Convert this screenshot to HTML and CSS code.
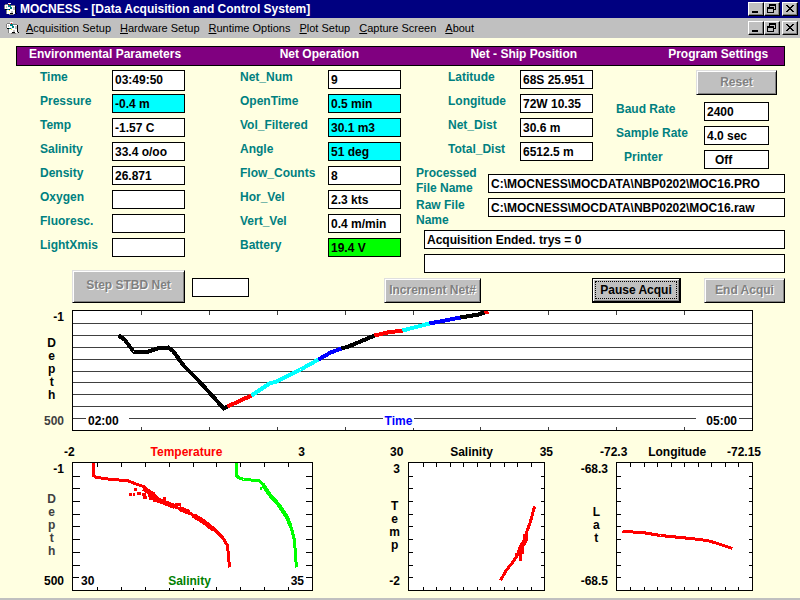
FILE: index.html
```
<!DOCTYPE html>
<html lang="en">
<head>
    <meta charset="UTF-8">
    <meta name="viewport" content="width=device-width, initial-scale=1.0">
    <title>MOCNESS</title>
    <link rel="stylesheet" href="styles.css">
</head>
<body>
    <!-- shared icons -->
    <svg class="defs" width="0" height="0">
        <symbol id="app" viewBox="0 0 14 14">
            <path fill="#808080" d="M1 2h3v1H1zM0 3h1v4H0zM7 3h4v1H7zM2 8h1v4H2zM5 12h5v1H5z"/>
            <path fill="#fff" d="M4 1h3v1H4zM1 3h6v4H1zM7 4h4v3H7zM3 8h3v4H3zM6 7h5v5H6z"/>
            <path fill="#008080" d="M4 3h3v2H4zM6 5h2v2H6zM3 7h2v1H3z"/>
            <path fill="#c0c0c0" d="M2 4h1v2H2zM9 5h2v3H9zM7 9h2v2H7z"/>
            <path fill="#000" d="M1 7h2v1H1zM11 4h1v7h-1zM6 11h3v1H6zM12 11h1v1h-1z"/>
            <path fill="#ff0" d="M5 8h1v1H5z"/>
            <path fill="#f00" d="M5 2h1v1H5z"/>
        </symbol>
        <symbol id="min" viewBox="0 0 12 10"><path d="M2 7h6v2H2z"/></symbol>
        <symbol id="restore" viewBox="0 0 12 10">
            <path fill-rule="evenodd" d="M3 0h7v6H8v3H1V3h2zM4 2v1h4v2h1V2zM2 5v3h5V5z"/>
        </symbol>
        <symbol id="close" viewBox="0 0 12 10">
            <path d="M2 1h2v1h1v1h2V2h1V1h2v1H9v1H8v1H7v1h1v1h1v1h1v1H8V7H7V6H5v1H4v1H2V7h1V6h1V5h1V4H4V3H3V2H2z"/>
        </symbol>
    </svg>

    <header class="titlebar">
        <svg class="app-icon"><use href="#app"/></svg>
        <h1>MOCNESS - [Data Acquisition and Control System]</h1>
        <div class="win-buttons">
            <button aria-label="Minimize"><svg><use href="#min"/></svg></button>
            <button aria-label="Restore"><svg><use href="#restore"/></svg></button>
            <button aria-label="Close"><svg><use href="#close"/></svg></button>
        </div>
    </header>
    <nav class="menubar">
        <svg class="app-icon"><use href="#app"/></svg>
        <a href="#"><u>A</u>cquisition Setup</a>
        <a href="#"><u>H</u>ardware Setup</a>
        <a href="#"><u>R</u>untime Options</a>
        <a href="#"><u>P</u>lot Setup</a>
        <a href="#"><u>C</u>apture Screen</a>
        <a href="#"><u>A</u>bout</a>
        <div class="win-buttons">
            <button aria-label="Minimize window"><svg><use href="#min"/></svg></button>
            <button aria-label="Restore window"><svg><use href="#restore"/></svg></button>
            <button aria-label="Close window"><svg><use href="#close"/></svg></button>
        </div>
    </nav>

    <main>
        <div class="section-bar">
            <h2>Environmental Parameters</h2>
            <h2>Net Operation</h2>
            <h2>Net - Ship Position</h2>
            <h2>Program Settings</h2>
        </div>

        <div class="panels">
            <section class="fields env">
                <label for="time">Time</label><input id="time" class="tall" value="03:49:50" readonly>
                <label for="pressure">Pressure</label><input id="pressure" class="cyan" value="-0.4 m" readonly>
                <label for="temp">Temp</label><input id="temp" value="-1.57 C" readonly>
                <label for="salinity">Salinity</label><input id="salinity" value="33.4 o/oo" readonly>
                <label for="density">Density</label><input id="density" value="26.871" readonly>
                <label for="oxygen">Oxygen</label><input id="oxygen" readonly>
                <label for="fluor">Fluoresc.</label><input id="fluor" readonly>
                <label for="light">LightXmis</label><input id="light" readonly>
            </section>

            <section class="fields net">
                <label for="netnum">Net_Num</label><input id="netnum" value="9" readonly>
                <label for="opentime">OpenTime</label><input id="opentime" class="cyan" value="0.5 min" readonly>
                <label for="vol">Vol_Filtered</label><input id="vol" class="cyan" value="30.1 m3" readonly>
                <label for="angle">Angle</label><input id="angle" class="cyan" value="51 deg" readonly>
                <label for="flow">Flow_Counts</label><input id="flow" value="8" readonly>
                <label for="hvel">Hor_Vel</label><input id="hvel" value="2.3 kts" readonly>
                <label for="vvel">Vert_Vel</label><input id="vvel" value="0.4 m/min" readonly>
                <label for="battery">Battery</label><input id="battery" class="green" value="19.4 V" readonly>
            </section>

            <section class="right">
                <div class="right-top">
                    <div class="fields position">
                        <label for="lat">Latitude</label><input id="lat" value="68S 25.951" readonly>
                        <label for="lon">Longitude</label><input id="lon" value="72W 10.35" readonly>
                        <label for="netdist">Net_Dist</label><input id="netdist" value="30.6 m" readonly>
                        <label for="totdist">Total_Dist</label><input id="totdist" value="6512.5 m" readonly>
                    </div>
                    <div class="settings">
                        <button class="btn reset" disabled>Reset</button>
                        <div class="fields">
                            <label for="baud">Baud Rate</label><input id="baud" value="2400" readonly>
                            <label for="rate">Sample Rate</label><input id="rate" value="4.0 sec" readonly>
                            <label for="printer" class="indent">Printer</label><input id="printer" class="indent" value="Off" readonly>
                        </div>
                    </div>
                </div>
                <div class="files">
                    <div class="file-labels">
                        <label for="pro">Processed File Name</label>
                        <label for="raw">Raw File Name</label>
                    </div>
                    <div class="file-boxes">
                        <input id="pro" value="C:\MOCNESS\MOCDATA\NBP0202\MOC16.PRO" readonly>
                        <input id="raw" value="C:\MOCNESS\MOCDATA\NBP0202\MOC16.raw" readonly>
                    </div>
                </div>
                <div class="messages">
                    <input aria-label="Status" value="Acquisition Ended. trys = 0" readonly>
                    <input aria-label="Message" readonly>
                </div>
            </section>
        </div>

        <div class="controls">
            <button class="btn step" disabled>Step STBD Net</button>
            <input class="step-box" aria-label="Net to step">
            <button class="btn incr" disabled>Increment Net#</button>
            <button class="btn pause"><span>Pause Acqui</span></button>
            <button class="btn end" disabled>End Acqui</button>
        </div>

        <figure class="plot profile">
            <div class="y-axis"><span>-1</span><span class="word">D<br>e<br>p<br>t<br>h</span><span class="gray">500</span></div>
            <div class="canvas">
                <svg viewBox="0 0 681 121" preserveAspectRatio="none">
                    <g transform="translate(.5 .5)">
                        <path class="grid" d="M0 13h680M0 25h680M0 37h680M0 49h680M0 61h680M0 72h680M0 84h680M0 96h680M0 108h680"/>
                        <path class="grid" d="M69 0v4M137 0v4M205 0v4M273 0v4M341 0v4M408 0v4M476 0v4M544 0v4M612 0v4M69 120v-4M137 120v-4M205 120v-4M273 120v-4M341 120v-4M408 120v-4M476 120v-4M544 120v-4M612 120v-4"/>
                        <g class="trace thick">
                            <path stroke="#000" d="M46 25l6 4 9 12h15l9-3 11-1 5 4 10 14 14 14 20 22 6 7 4-2"/>
                            <path stroke="#f00" d="M155 96l24-11"/>
                            <path stroke="#0ff" d="M179 85l18-12 7-2 24-12 18-10"/>
                            <path stroke="#00f" d="M246 49l12-7 11-4"/>
                            <path stroke="#000" d="M269 38l7-2 12-5 14-6"/>
                            <path stroke="#f00" d="M302 25l13-3 15-2"/>
                            <path stroke="#0ff" d="M330 20l27-7"/>
                            <path stroke="#00f" d="M357 13l31-6"/>
                            <path stroke="#000" d="M388 7l18-3 6-2"/>
                            <path stroke="#f00" d="M412 2l4-1"/>
                        </g>
                        <rect class="frame" width="680" height="120"/>
                    </g>
                </svg>
                <div class="x-inside"><span class="from">02:00</span><span class="blue">Time</span><span class="to">05:00</span></div>
            </div>
        </figure>

        <div class="small-plots">
            <figure class="plot depth-plot">
                <figcaption class="x-axis"><span>-2</span><span class="red">Temperature</span><span>3</span></figcaption>
                <div class="y-axis"><span>-1</span><span class="word gray">D<br>e<br>p<br>t<br>h</span><span>500</span></div>
                <div class="canvas">
                    <svg viewBox="0 0 241 129" preserveAspectRatio="none">
                        <g transform="translate(.5 .5)">
                            <path class="tick" d="M25 0v4M49 0v4M73 0v4M97 0v4M121 0v4M144 0v4M168 0v4M192 0v4M216 0v4M25 128v-4M49 128v-4M73 128v-4M97 128v-4M121 128v-4M144 128v-4M168 128v-4M192 128v-4M216 128v-4"/>
                            <path class="tick" d="M0 14h7M0 26h7M0 39h7M0 52h7M0 64h7M0 77h7M0 90h7M0 103h7M0 115h7M240 14h-7M240 26h-7M240 39h-7M240 52h-7M240 64h-7M240 77h-7M240 90h-7M240 103h-7M240 115h-7"/>
                            <g class="trace" stroke="#f00">
                                <path d="M21 0v13l3 2 9 1 5 1 17 1 7 3 9 3 4 4 6 3 5 6 5 3 10 4 12 4 8 5 10 5 10 8 9 9 5 8 1 10 1 12"/>
                                <path stroke-width="5" d="M71 26l8 5 5 6 8 3 10 4M107 46l10 4M121 53l10 6 10 8"/>
                                <path d="M56 32h3M60 32h2M63 25v3M64 31h4M69 32h4M70 35h4M75 33h4M76 36h4M80 38h5M92 34v6M102 42h6"/>
                            </g>
                            <g class="trace" stroke="#0f0">
                                <path d="M164 0v13l2 2 5 2 15 1 5 4 5 9 9 10 9 13 5 12 3 12 1 15 1 12"/>
                                <path stroke-width="4" d="M191 23l6 9 9 10 8 12 4 9"/>
                                <path d="M187 26h2"/>
                            </g>
                            <rect class="frame" width="240" height="128"/>
                        </g>
                    </svg>
                    <div class="x-inside"><span>30</span><span class="dark-green">Salinity</span><span>35</span></div>
                </div>
            </figure>

            <figure class="plot ts-plot">
                <figcaption class="x-axis"><span>30</span><span>Salinity</span><span>35</span></figcaption>
                <div class="y-axis"><span>3</span><span class="word">T<br>e<br>m<br>p</span><span>-2</span></div>
                <div class="canvas">
                    <svg viewBox="0 0 137 129" preserveAspectRatio="none">
                        <g transform="translate(.5 .5)">
                            <path class="tick" d="M15 0v4M28 0v4M42 0v4M55 0v4M69 0v4M82 0v4M96 0v4M109 0v4M123 0v4M15 128v-4M28 128v-4M42 128v-4M55 128v-4M69 128v-4M82 128v-4M96 128v-4M109 128v-4M123 128v-4"/>
                            <path class="tick" d="M0 14h4M0 26h4M0 39h4M0 52h4M0 64h4M0 77h4M0 90h4M0 103h4M0 115h4M136 14h-4M136 26h-4M136 39h-4M136 52h-4M136 64h-4M136 77h-4M136 90h-4M136 103h-4M136 115h-4"/>
                            <g class="trace" stroke="#f00">
                                <path d="M126 44l-4 15-4 11-2 11-6 10-6 9-7 9-5 9"/>
                                <path stroke-width="5" d="M117 71v6l-5 9-2 7"/>
                                <path d="M106 92h7M112 90v8M114 82v9"/>
                            </g>
                            <rect class="frame" width="136" height="128"/>
                        </g>
                    </svg>
                </div>
            </figure>

            <figure class="plot map-plot">
                <figcaption class="x-axis"><span>-72.3</span><span>Longitude</span><span>-72.15</span></figcaption>
                <div class="y-axis"><span>-68.3</span><span class="word">L<br>a<br>t</span><span>-68.5</span></div>
                <div class="canvas">
                    <svg viewBox="0 0 137 129" preserveAspectRatio="none">
                        <g transform="translate(.5 .5)">
                            <path class="tick" d="M14 0v4M28 0v4M41 0v4M55 0v4M68 0v4M82 0v4M95 0v4M109 0v4M122 0v4M14 128v-4M28 128v-4M41 128v-4M55 128v-4M68 128v-4M82 128v-4M95 128v-4M109 128v-4M122 128v-4"/>
                            <path class="tick" d="M0 14h4M0 26h4M0 39h4M0 52h4M0 64h4M0 77h4M0 90h4M0 103h4M0 115h4M136 14h-4M136 26h-4M136 39h-4M136 52h-4M136 64h-4M136 77h-4M136 90h-4M136 103h-4M136 115h-4"/>
                            <path class="trace" stroke="#f00" d="M6 69l20 1 18 3 30 3 17 2 10 3 15 5"/>
                            <rect class="frame" width="136" height="128"/>
                        </g>
                    </svg>
                </div>
            </figure>
        </div>
    </main>
</body>
</html>
```
FILE: styles.css
```
* {
    box-sizing: border-box;
}
body {
    margin: 0;
    background-color: #ffffe1;
    border-bottom: 2px solid #c0c0c0;
    font-family: "Liberation Sans", Arial, sans-serif;
    font-size: 12px;
    font-weight: bold;
    line-height: 15px;
    color: #000;
}
h1, h2, figure {
    margin: 0;
    font-size: 12px;
}
button, input {
    font: inherit;
    margin: 0;
}
.defs {
    position: absolute;
}

/* title and menu */
.titlebar, .menubar {
    display: flex;
    align-items: center;
    padding: 0 2px 0 4px;
}
.titlebar {
    height: 18px;
    background-color: #000080;
    color: #fff;
}
.titlebar h1 {
    margin-left: 2px;
    white-space: nowrap;
}
.menubar {
    height: 20px;
    background-color: #c0c0c0;
    font-size: 11px;
    font-weight: normal;
    gap: 9px;
}
.menubar a {
    color: #000;
    text-decoration: none;
    white-space: nowrap;
}
.menubar .app-icon {
    margin: 0 -3px 0 2px;
}
.app-icon {
    width: 14px;
    height: 14px;
    flex: none;
    shape-rendering: crispEdges;
}
.win-buttons {
    display: flex;
    margin-left: auto;
}
.win-buttons button {
    width: 16px;
    height: 14px;
    padding: 1px;
    background-color: #c0c0c0;
    border: 1px solid;
    border-color: #fff #000 #000 #fff;
    box-shadow: inset -1px -1px #808080;
}
.win-buttons button:last-child {
    margin-left: 2px;
}
.win-buttons svg {
    display: block;
    width: 12px;
    height: 10px;
    shape-rendering: crispEdges;
}

main {
    padding: 8px 15px 7px 16px;
}
.section-bar {
    display: grid;
    grid-template-columns: 251fr 191fr 198fr 116fr;
    height: 20px;
    padding-left: 12px;
    background-color: #800080;
    border: 1px solid #000;
    color: #fff;
    white-space: nowrap;
}

/* readouts */
.panels {
    display: grid;
    grid-template-columns: 200fr 176fr 369fr;
    padding: 4px 0 0 24px;
}
.fields {
    display: grid;
    grid-template-columns: 72px 73px;
    grid-auto-rows: 19px;
    row-gap: 5px;
    align-content: start;
}
.fields.net {
    grid-template-columns: 88px 73px;
}
label {
    color: #008080;
}
input {
    width: 100%;
    height: 19px;
    padding: 0 2px;
    background-color: #fff;
    border: 1px solid #000;
    border-radius: 0;
    color: #000;
}
input.tall {
    height: 21px;
    padding-bottom: 2px;
}
input.cyan {
    background-color: #0ff;
}
input.green {
    background-color: #0f0;
}
.right-top {
    display: flex;
    justify-content: space-between;
    padding-left: 32px;
}
.settings {
    width: 169px;
}
.settings .fields {
    grid-template-columns: 88px 65px;
    margin-top: 7px;
}
label.indent {
    padding-left: 8px;
}
input.indent {
    padding-left: 10px;
}
.files {
    display: flex;
    margin-top: -3px;
}
.file-labels {
    width: 72px;
    flex: none;
}
.file-labels label {
    display: block;
    height: 32px;
}
.file-boxes {
    flex: 1;
    padding-top: 8px;
}
.file-boxes, .messages {
    display: flex;
    flex-direction: column;
    gap: 5px;
}
.messages {
    margin-left: 8px;
}

/* buttons */
.btn {
    height: 25px;
    padding: 0;
    background-color: #c0c0c0;
    border: 1px solid;
    border-color: #dfdfdf #000 #000 #dfdfdf;
    box-shadow: inset 1px 1px #fff, inset -1px -1px #808080;
    color: #000;
    white-space: nowrap;
}
.btn:disabled {
    color: #808080;
    text-shadow: 1px 1px #fff;
}
.reset {
    display: block;
    width: 81px;
    margin-left: 80px;
}
.controls {
    display: grid;
    grid-template-columns: 120fr 192fr 208fr 112fr 81fr;
    align-items: end;
    margin-top: -3px;
    padding-left: 56px;
}
.step {
    width: 113px;
    height: 33px;
    padding-bottom: 2px;
}
.step-box {
    width: 57px;
    margin-bottom: 6px;
}
.incr {
    width: 97px;
}
.pause {
    width: 89px;
    padding: 2px;
    border: 2px solid #000;
    border-width: 1px 2px 2px 1px;
    box-shadow: inset 1px 1px #fff, inset -1px -1px #808080;
}
.pause span {
    display: block;
    border: 1px dotted #000;
    line-height: 16px;
}
.end {
    width: 81px;
}

/* plots */
.plot {
    display: grid;
    grid-template-columns: 56px 1fr;
}
.profile {
    margin: 7px 32px 0 0;
}
.canvas {
    position: relative;
}
.canvas svg {
    display: block;
    width: 100%;
    height: 129px;
    background-color: #fff;
    shape-rendering: crispEdges;
}
.profile .canvas svg {
    height: 121px;
}
.y-axis {
    display: flex;
    flex-direction: column;
    justify-content: space-between;
    align-items: flex-end;
    padding: 1px 8px 3px 0;
    line-height: 13px;
}
.word {
    margin-right: 8px;
    text-align: center;
}
.x-axis {
    grid-column: 2;
    display: flex;
    justify-content: space-between;
    margin: 0 -8px;
    height: 17px;
}
.depth-plot .x-axis {
    margin-right: 8px;
}
.x-inside {
    position: absolute;
    left: 7px;
    right: 7px;
    bottom: 3px;
    display: flex;
    justify-content: space-between;
    line-height: 13px;
}
.profile .x-inside {
    left: 14px;
    right: 14px;
}
.x-inside span {
    background-color: #fff;
    padding: 0 2px;
}
.x-inside .from {
    padding-right: 10px;
}
.x-inside .to {
    padding-left: 10px;
}
.x-inside .blue {
    margin-right: 28px;
}
.x-inside .dark-green {
    margin-right: 6px;
}
.small-plots {
    display: grid;
    grid-template-columns: 297fr 232fr 208fr;
    margin: 14px 32px 0 0;
}
.ts-plot {
    grid-template-columns: 95px 1fr;
}
.ts-plot .x-axis {
    margin-left: -18px;
}
.ts-plot .word {
    margin-right: 0;
}
.map-plot {
    grid-template-columns: 71px 1fr;
}
.map-plot .x-axis {
    margin-left: -16px;
}
.frame, .tick, .grid, .trace {
    fill: none;
    stroke-width: 1;
}
.frame, .tick {
    stroke: #000;
}
.grid {
    stroke: #404040;
}
.trace {
    stroke-width: 3;
}
.trace.thick {
    stroke-width: 4;
}
.gray {
    color: #404040;
}
.red {
    color: #f00;
}
.blue {
    color: #00f;
}
.dark-green {
    color: #008000;
}
```
